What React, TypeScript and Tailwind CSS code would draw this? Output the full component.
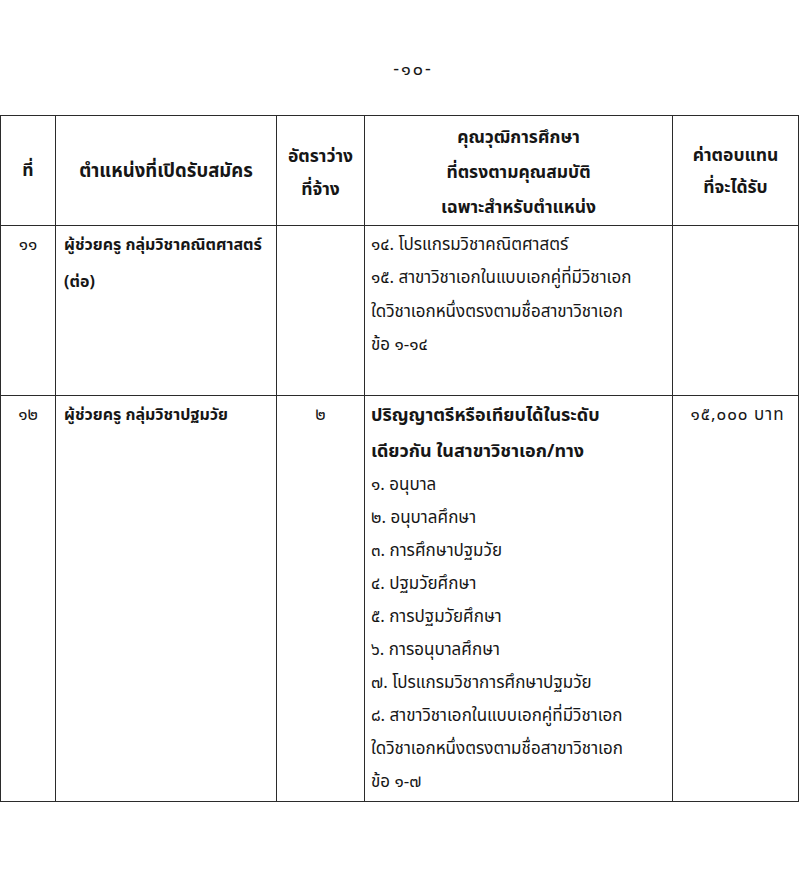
export default function App() {
  const font = { fontFamily: '"Noto Sans Thai", "Loma", "Garuda", "Tlwg Typo", "Liberation Sans", "DejaVu Sans", sans-serif' };
  const qual11 = [
    "๑๔. โปรแกรมวิชาคณิตศาสตร์",
    "๑๕. สาขาวิชาเอกในแบบเอกคู่ที่มีวิชาเอก",
    "ใดวิชาเอกหนึ่งตรงตามชื่อสาขาวิชาเอก",
    "ข้อ ๑-๑๔",
  ];
  const qual12 = [
    "๑. อนุบาล",
    "๒. อนุบาลศึกษา",
    "๓. การศึกษาปฐมวัย",
    "๔. ปฐมวัยศึกษา",
    "๕. การปฐมวัยศึกษา",
    "๖. การอนุบาลศึกษา",
    "๗. โปรแกรมวิชาการศึกษาปฐมวัย",
    "๘. สาขาวิชาเอกในแบบเอกคู่ที่มีวิชาเอก",
    "ใดวิชาเอกหนึ่งตรงตามชื่อสาขาวิชาเอก",
    "ข้อ ๑-๗",
  ];

  const cell = "border-[1.5px] border-[#2b2b2b]";

  return (
    <div className="w-[800px] h-[873px] bg-white text-[#161616] overflow-hidden" style={font}>
      <div className="h-[115px] flex justify-center pt-[57px]">
        <p className="text-[18px] leading-[26px] ml-[26px] tracking-[2px]">-๑๐-</p>
      </div>

      <table className="border-collapse table-fixed w-[798px] text-[17px]">
        <colgroup>
          <col className="w-[55px]" />
          <col className="w-[221px]" />
          <col className="w-[88px]" />
          <col className="w-[308px]" />
          <col className="w-[126px]" />
        </colgroup>
        <thead>
          <tr className="h-[108px] font-bold text-center text-[17.5px]">
            <th className={`${cell} align-middle pt-[2px]`}>ที่</th>
            <th className={`${cell} align-middle pt-[2px] text-[18.5px]`}>ตำแหน่งที่เปิดรับสมัคร</th>
            <th className={`${cell} align-middle leading-[33px] pt-[4px]`}>
              อัตราว่าง
              <br />
              ที่จ้าง
            </th>
            <th className={`${cell} align-middle leading-[35px] pt-[4px]`}>
              คุณวุฒิการศึกษา
              <br />
              ที่ตรงตามคุณสมบัติ
              <br />
              เฉพาะสำหรับตำแหน่ง
            </th>
            <th className={`${cell} align-middle leading-[32px] pt-[2px]`}>
              ค่าตอบแทน
              <br />
              ที่จะได้รับ
            </th>
          </tr>
        </thead>
        <tbody className="leading-[33.4px]">
          <tr className="h-[170px] align-top">
            <td className={`${cell} text-center pt-[3px]`}>๑๑</td>
            <td className={`${cell} px-[8px] pt-[3px] font-bold text-[16px]`}>
              ผู้ช่วยครู กลุ่มวิชาคณิตศาสตร์
              <br />
              <span className="leading-[40px]">(ต่อ)</span>
            </td>
            <td className={cell}></td>
            <td className={`${cell} px-[6px] pt-[3px]`}>
              {qual11.map((q) => (
                <div key={q}>{q}</div>
              ))}
            </td>
            <td className={cell}></td>
          </tr>
          <tr className="h-[406px] align-top">
            <td className={`${cell} text-center pt-[3px]`}>๑๒</td>
            <td className={`${cell} px-[8px] pt-[3px] font-bold text-[16px]`}>ผู้ช่วยครู กลุ่มวิชาปฐมวัย</td>
            <td className={`${cell} text-center pt-[3px]`}>๒</td>
            <td className={`${cell} px-[6px] pt-[2px] leading-[33px]`}>
              <div className="font-bold text-[18px] leading-[36px]">ปริญญาตรีหรือเทียบได้ในระดับ</div>
              <div className="font-bold text-[18px] leading-[35px]">เดียวกัน ในสาขาวิชาเอก/ทาง</div>
              {qual12.map((q) => (
                <div key={q}>{q}</div>
              ))}
            </td>
            <td className={`${cell} text-center pt-[3px] pl-[4px] tracking-[1px]`}>๑๕,๐๐๐ บาท</td>
          </tr>
        </tbody>
      </table>
    </div>
  );
}
